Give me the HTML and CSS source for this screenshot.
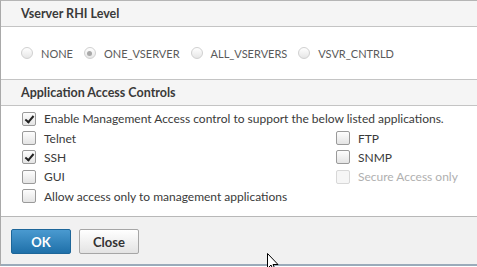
FILE: index.html
```html
<!DOCTYPE html>
<html lang="en">
<head>
    <meta charset="UTF-8">
    <title>Vserver RHI Level</title>
    <link rel="stylesheet" href="styles.css">
</head>
<body>
    <div class="panel">
        <div class="section-head">Vserver RHI Level</div>
        <div class="radio-row">
            <label class="radio"><span class="dot"></span>NONE</label>
            <label class="radio"><span class="dot on"></span>ONE_VSERVER</label>
            <label class="radio"><span class="dot"></span>ALL_VSERVERS</label>
            <label class="radio"><span class="dot"></span>VSVR_CNTRLD</label>
        </div>

        <div class="section-head split">Application Access Controls</div>
        <div class="checks">
            <label class="check wide"><span class="box on"></span>Enable Management Access control to support the below listed applications.</label>
            <label class="check"><span class="box"></span>Telnet</label>
            <label class="check"><span class="box"></span>FTP</label>
            <label class="check"><span class="box on"></span>SSH</label>
            <label class="check"><span class="box"></span>SNMP</label>
            <label class="check"><span class="box"></span>GUI</label>
            <label class="check off"><span class="box"></span>Secure Access only</label>
            <label class="check wide"><span class="box"></span>Allow access only to management applications</label>
        </div>

        <div class="footer">
            <button class="btn primary">OK</button>
            <button class="btn">Close</button>
        </div>
    </div>

    <!-- mouse pointer -->
    <svg class="cursor" width="12" height="19" viewBox="0 0 12 19">
        <path d="M0.5 0.5 L0.5 15.5 L4 12 L6.5 18 L8.5 17 L6 11.5 L11 11.5 Z" fill="#fff" stroke="#000" stroke-width="1"/>
    </svg>
</body>
</html>
```

FILE: styles.css
```css
/* page */
body {
    margin: 0;
    background: #ffffff;
    font-family: Lato, "Liberation Sans", sans-serif;
    font-size: 12px;
    color: #333333;
    position: relative;
    height: 267px;
    overflow: hidden;
}

.panel {
    border-left: 1px solid #a9a9a9;
    border-top: 1px solid #b5b5b5;
    height: 266px;
    box-sizing: border-box;
    display: flex;
    flex-direction: column;
}

/* section headers */
.section-head {
    height: 25px;
    line-height: 25px;
    padding-left: 20px;
    background-color: #f5f5f5;
    border-bottom: 1px solid #c4c4c4;
    font-size: 12.5px;
    font-weight: bold;
    color: #3a3a3a;
}

.section-head.split {
    border-top: 1px solid #c4c4c4;
}

/* radio buttons */
.radio-row {
    height: 52px;
    display: flex;
    align-items: center;
    padding-left: 20px;
    gap: 11px;
    font-size: 11px;
    color: #5a5a5a;
}

.radio {
    display: flex;
    align-items: center;
}

.dot {
    width: 12px;
    height: 12px;
    border-radius: 50%;
    border: 1px solid #d0d0d0;
    background: linear-gradient(#ffffff, #e6e6e6);
    box-sizing: border-box;
    margin-right: 8px;
    position: relative;
}

.dot.on::after {
    content: "";
    position: absolute;
    left: 2.5px;
    top: 2.5px;
    width: 5px;
    height: 5px;
    border-radius: 50%;
    background: #a8a8a8;
}

/* checkboxes */
.checks {
    display: grid;
    grid-template-columns: 314px auto;
    grid-auto-rows: 19.4px;
    padding: 3px 0 0 21px;
    height: 110px;
    box-sizing: border-box;
    color: #3a3a3a;
}

.check {
    display: flex;
    align-items: center;
    white-space: nowrap;
}

.check.wide {
    grid-column: 1 / 3;
}

.check.off {
    color: #b0b0b0;
}

.box {
    width: 14px;
    height: 14px;
    box-sizing: border-box;
    border: 1px solid #9a9a9a;
    border-radius: 2px;
    background: linear-gradient(#fdfdfd, #e4e4e4);
    margin-right: 8px;
    position: relative;
}

.check.off .box {
    border-color: #d8d8d8;
    background: #f6f6f6;
}

.box.on::after {
    content: "";
    position: absolute;
    left: 4px;
    top: 1px;
    width: 3px;
    height: 7px;
    border: solid #222222;
    border-width: 0 2px 2px 0;
    transform: rotate(40deg);
}

/* footer */
.footer {
    flex: 1;
    background-color: #f1f1f1;
    border-top: 1px solid #b8b8b8;
    border-bottom: 2px solid #9aabba;
    display: flex;
    align-items: flex-start;
    gap: 8px;
    padding: 12px 0 0 10px;
}

.btn {
    width: 60px;
    height: 25px;
    font-family: inherit;
    font-size: 13px;
    font-weight: bold;
    color: #333333;
    border: 1px solid #a6a6a6;
    border-radius: 2px;
    background: linear-gradient(#ffffff, #e3e3e3);
    padding: 0;
}

.btn.primary {
    color: #ffffff;
    border-color: #1d6699;
    background: linear-gradient(#4a9ad0, #1f70a9);
}

.cursor {
    position: absolute;
    left: 267px;
    top: 253px;
}
```
